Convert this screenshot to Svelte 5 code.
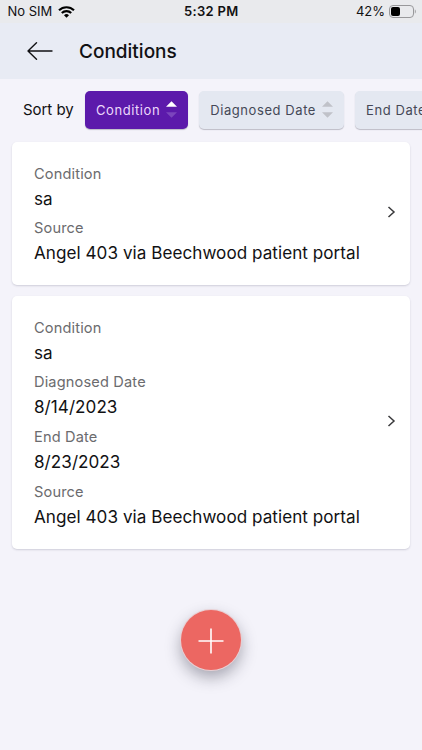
<script>
    const sorts = [
        { name: "Condition", active: true },
        { name: "Diagnosed Date", active: false },
        { name: "End Date", active: false },
    ];

    const conditions = [
        [
            { label: "Condition", value: "sa" },
            { label: "Source", value: "Angel 403 via Beechwood patient portal" },
        ],
        [
            { label: "Condition", value: "sa" },
            { label: "Diagnosed Date", value: "8/14/2023" },
            { label: "End Date", value: "8/23/2023" },
            { label: "Source", value: "Angel 403 via Beechwood patient portal" },
        ],
    ];
</script>

<style>
    :global(body) {
        background: #f4f3fa;
    }
    .screen {
        height: 750px;
        display: flex;
        flex-direction: column;
        overflow: hidden;
        background: #f4f3fa;
        font-family: Inter, "Liberation Sans", sans-serif;
        color: #111113;
    }
    button {
        font-family: inherit;
        border: none;
        padding: 0;
    }
    svg {
        display: block;
        flex: none;
    }
    .status-bar {
        height: 23px;
        flex: none;
        display: grid;
        grid-template-columns: 1fr auto 1fr;
        align-items: center;
        padding: 0 6px 0 7.5px;
        background: #e9eaed;
        font-size: 13px;
        line-height: 23px;
    }
    .carrier {
        display: flex;
        align-items: center;
        gap: 6px;
    }
    .time {
        margin-right: 1px;
        font-weight: 600;
        letter-spacing: 0.3px;
    }
    .battery {
        display: flex;
        align-items: center;
        justify-content: flex-end;
        gap: 4px;
    }
    .header {
        height: 56px;
        flex: none;
        display: flex;
        align-items: center;
        padding-left: 27px;
        background: #e8ebf4;
    }
    .back {
        background: none;
        margin-right: 26px;
    }
    .header h1 {
        margin: 0;
        font-size: 19px;
        font-weight: 500;
        line-height: 25px;
    }
    .sort-bar {
        height: 61px;
        flex: none;
        display: flex;
        align-items: center;
        padding: 0 0 2px 23px;
        overflow: hidden;
    }
    .sort-label {
        width: 62px;
        flex: none;
        font-size: 15px;
        letter-spacing: -0.05px;
    }
    .sort {
        height: 38px;
        flex: none;
        display: flex;
        align-items: center;
        gap: 6px;
        margin-right: 11px;
        padding: 0 11px;
        border-radius: 5px;
        background: #e4e8f1;
        box-shadow: 0 1px 1px rgba(60, 60, 80, 0.3);
        color: #454857;
        font-size: 13px;
        letter-spacing: 0.58px;
    }
    .sort--active {
        background: #5c1aab;
        color: #ecd9fb;
    }
    .sort svg {
        margin-bottom: 1px;
    }
    .arrow {
        fill: #c0c2c9;
    }
    .sort--active .arrow--up {
        fill: #ffffff;
    }
    .sort--active .arrow--down {
        fill: #7b45bd;
    }
    .list {
        display: flex;
        flex-direction: column;
        gap: 11px;
        padding: 0 12px;
    }
    .card {
        display: flex;
        align-items: center;
        justify-content: space-between;
        padding: 20.5px 14px 13px 22px;
        border-radius: 5px;
        background: #ffffff;
        box-shadow: 0 1px 2px rgba(60, 60, 90, 0.2);
    }
    .chevron {
        margin-bottom: 10px;
    }
    .field {
        height: 54.8px;
    }
    .field p {
        margin: 0;
        white-space: nowrap;
    }
    .field .label {
        font-size: 14.6px;
        line-height: 23px;
        letter-spacing: 0.15px;
        color: #6b6b6e;
    }
    .field .value {
        font-size: 17.1px;
        line-height: 25px;
        letter-spacing: 0.04px;
    }
    .add {
        width: 60px;
        height: 60px;
        flex: none;
        display: flex;
        align-items: center;
        justify-content: center;
        margin: 61px auto 0;
        padding-top: 2px;
        border-radius: 50%;
        background: #ec6762;
        box-shadow: 0 0 0 1px #e9cfd3, 0 7px 16px rgba(40, 40, 60, 0.4);
    }
</style>

<div class="screen">
    <div class="status-bar">
        <div class="carrier">
            <span>No SIM</span>
            <svg width="17" height="12" viewBox="0 0 17 12" fill="none" stroke="#000" stroke-width="2.1">
                <path d="M1 4.3a10.6 10.6 0 0 1 15 0" />
                <path d="M3.8 7.1a6.6 6.6 0 0 1 9.4 0" />
                <path d="M8.5 11.8 6 9.3a3.6 3.6 0 0 1 5 0Z" fill="#000" stroke="none" />
            </svg>
        </div>
        <div class="time">5:32 PM</div>
        <div class="battery">
            <span>42%</span>
            <svg width="27" height="13" viewBox="0 0 27 13">
                <rect x="0.5" y="0.5" width="24" height="12" rx="3.5" fill="none" stroke="#98989b" />
                <rect x="2" y="2" width="9" height="9" rx="2" fill="#000" />
                <path d="M25.8 4.5c1.3.5 1.3 3.5 0 4Z" fill="#98989b" />
            </svg>
        </div>
    </div>

    <div class="header">
        <button class="back" aria-label="Back">
            <svg width="26" height="18" viewBox="0 0 26 18" fill="none" stroke="#111113" stroke-width="1.4" stroke-linecap="round" stroke-linejoin="round">
                <path d="M25 9H1M9.5 .8 1 9l8.5 8.2" />
            </svg>
        </button>
        <h1>Conditions</h1>
    </div>

    <div class="sort-bar">
        <span class="sort-label">Sort by</span>
        {#each sorts as sort}
            <button class="sort" class:sort--active={sort.active}>
                <span>{sort.name}</span>
                <svg width="11" height="17" viewBox="0 0 11 17">
                    <path class="arrow arrow--up" d="M0 5.8 5.5.3 11 5.8Z" />
                    <path class="arrow arrow--down" d="M0 11.2h11l-5.5 5.5Z" />
                </svg>
            </button>
        {/each}
    </div>

    <div class="list">
        {#each conditions as fields}
            <div class="card">
                <div>
                    {#each fields as field}
                        <div class="field">
                            <p class="label">{field.label}</p>
                            <p class="value">{field.value}</p>
                        </div>
                    {/each}
                </div>
                <svg class="chevron" width="9" height="12" viewBox="0 0 9 12" fill="none" stroke="#3a3a3c" stroke-width="1.5">
                    <path d="M1.5 1 7 6l-5.5 5" />
                </svg>
            </div>
        {/each}
    </div>

    <button class="add" aria-label="Add condition">
        <svg width="26" height="26" viewBox="0 0 26 26" stroke="#ffffff" stroke-width="1.6">
            <path d="M13 .5v25M.5 13h25" />
        </svg>
    </button>
</div>
